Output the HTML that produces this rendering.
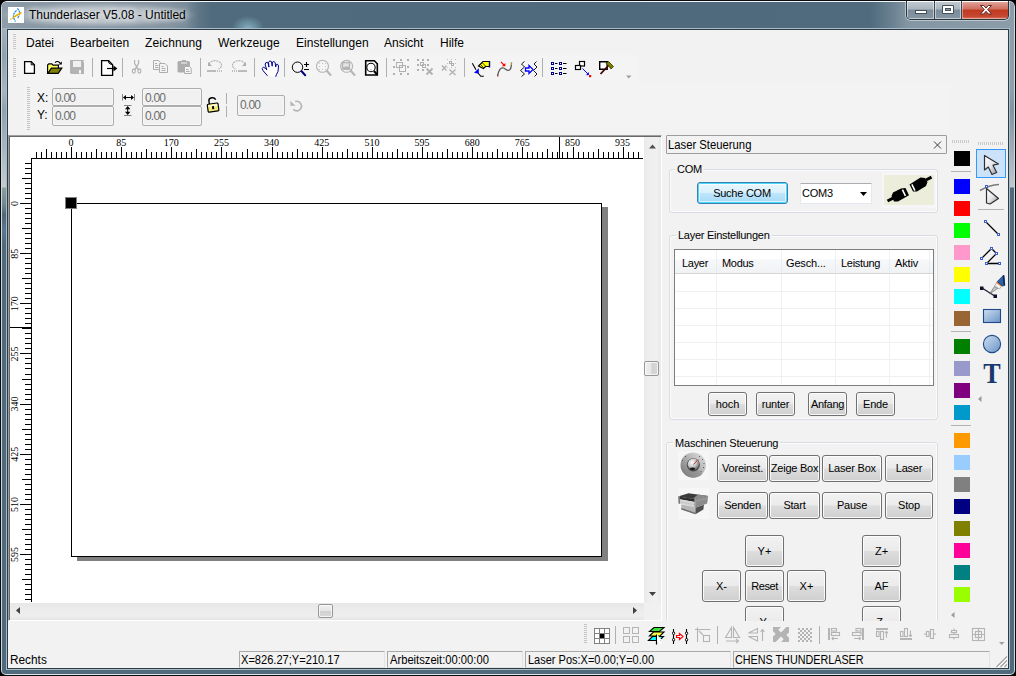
<!DOCTYPE html>
<html lang="de">
<head>
<meta charset="utf-8">
<title>Thunderlaser V5.08 - Untitled</title>
<style>
*{box-sizing:border-box;margin:0;padding:0}
html,body{width:1016px;height:676px;overflow:hidden;background:#000}
body{position:relative;font-family:"Liberation Sans",sans-serif;font-size:12px;color:#000}
.a{position:absolute}
.t{position:absolute;white-space:pre;line-height:14px;height:14px}
.t11{font-size:11px}
.btn{position:absolute;border:1px solid #707070;border-radius:3px;background:linear-gradient(#f2f2f2 0%,#ebebeb 48%,#dddddd 52%,#cfcfcf 100%);box-shadow:inset 0 0 0 1px rgba(255,255,255,.85);font-size:11px;text-align:center;white-space:pre}
.gb{position:absolute;border:1px solid #d7dde2;border-radius:3px;box-shadow:inset 0 0 0 1px #fcfcfc, 0 0 0 1px rgba(255,255,255,0.0)}
.gbl{position:absolute;background:#f2f2f2;font-size:11px;line-height:13px;height:13px;white-space:pre;padding:0 2px}
.inp{position:absolute;border:1px solid #adadad;border-radius:2px;background:#f1f1f1;color:#6d6d6d;font-size:12px;box-shadow:inset 0 0 0 1px #f7f7f7}
.sep{position:absolute;width:1px;background:#b0b0b0}
.sw{position:absolute;left:954px;width:16px;height:15px}
.pane{position:absolute;top:651px;height:17px;border:1px solid #a9a9a9;border-right-color:#e3e3e3;border-bottom-color:#e3e3e3}
svg{position:absolute;overflow:visible}
</style>
</head>
<body>
<!-- frame -->
<div class="a" id="win" style="left:0;top:0;width:1016px;height:676px;border-radius:7px 7px 6px 6px;background:#0a0d10;overflow:hidden">
  <div class="a" style="left:1px;top:1px;width:1014px;height:674px;border-radius:6px 6px 5px 5px;background:#4e6a7c;border:1px solid #ccd6dd;border-top-color:#f4f7f9;border-bottom-color:#dde3e7;overflow:hidden">
    <div class="a" style="left:0;top:0;width:1012px;height:26px;background:radial-gradient(ellipse 16px 12px at 246px 26px,rgba(150,190,215,.75) 0%,rgba(130,175,190,.5) 50%,rgba(120,160,180,0) 100%),radial-gradient(ellipse 100px 13px at 96px 13px,rgba(255,255,255,.5) 0%,rgba(255,255,255,.4) 55%,rgba(255,255,255,.12) 85%,rgba(255,255,255,0) 100%),linear-gradient(90deg,#8f9eaa 0px,#8a99a5 20px,#8695a1 165px,#788b99 184px,#5d7687 197px,#506b7d 210px,#4e6a7c 600px,#4f6b7d 868px,#6a8192 890px,#8496a3 906px,#8c9da9 1012px)"></div>
    <div class="a" style="left:0;top:26px;width:4px;height:222px;background:linear-gradient(#a5b1bb 0px,#8fa1af 27px,#a8b5bf 62px,#8fa2b0 82px,#aab6bf 122px,#c5ccd0 159px,#8a9e9c 160px,#6e8890 177px,#4d677a 187px,#5b7890 202px,#4e6a7c 217px)"></div>
    <div class="a" style="left:1008px;top:26px;width:4px;height:222px;background:linear-gradient(#8c9da9 0px,#8fa0ac 60px,#8094a3 82px,#a0adb8 122px,#c0c8ce 159px,#4e6a7c 160px)"></div>
  </div>
  <div class="a" style="left:6px;top:28px;width:1004px;height:642px;border:1px solid #a9bcc8"></div>
  <div class="a" style="left:7px;top:29px;width:1002px;height:640px;border:1px solid #2c3a44;background:#f2f2f2"></div>
  <svg style="left:8px;top:7px" width="16" height="16" viewBox="0 0 16 16"><rect width="16" height="16" fill="#fff"/><path d="M8.500 3.300Q5 7 5.400 9.500T7.500 14.600" fill="none" stroke="#1e8fe0" stroke-width="1.200" stroke-dasharray="2.200 .700"/><path d="M9.400 1.300Q12 4.500 11.700 6.500T9.400 11.600" fill="none" stroke="#1e8fe0" stroke-width="1.200" stroke-dasharray="2.200 .700"/><path d="M2.300 12.500L6 10" fill="none" stroke="#f2b400" stroke-width="1.200" stroke-dasharray="1.200 .600"/><path d="M6 10L13.500 5.500" fill="none" stroke="#f2b400" stroke-width="1.700"/></svg>
  <div class="t" style="left:29px;top:8px;font-size:12px;text-shadow:0 0 5px rgba(255,255,255,.9),0 0 9px rgba(255,255,255,.8)">Thunderlaser V5.08 - Untitled</div>
  <div class="a" style="left:905px;top:1px;width:105px;height:20px;border:1px solid rgba(255,255,255,.45);border-top:0;border-radius:0 0 6px 6px"></div>
  <div class="a" style="left:906px;top:1px;width:103px;height:19px;border:1px solid #27333d;border-top:0;border-radius:0 0 5px 5px;overflow:hidden">
    <div class="a" style="left:0;top:0;width:28px;height:18px;background:linear-gradient(#c3ccd3 0%,#aab5be 45%,#7b8d9b 50%,#8596a3 100%);box-shadow:inset 0 0 0 1px rgba(255,255,255,.5),inset 0 1px 0 #fff;border-right:1px solid #3b4852"></div>
    <div class="a" style="left:28px;top:0;width:27px;height:18px;background:linear-gradient(#c3ccd3 0%,#aab5be 45%,#7b8d9b 50%,#8596a3 100%);box-shadow:inset 0 0 0 1px rgba(255,255,255,.5),inset 0 1px 0 #fff;border-right:1px solid #3b4852"></div>
    <div class="a" style="left:55px;top:0;width:47px;height:18px;background:linear-gradient(#e6b0a8 0%,#d88a80 22%,#d0705f 45%,#c03a20 50%,#c64630 85%,#d97a60 100%);box-shadow:inset 0 0 0 1px rgba(255,255,255,.4),inset 0 1px 0 #fff"></div>
    <svg style="left:0;top:-1px" width="102" height="19" viewBox="0 0 102 19"><rect x="8.500" y="10.500" width="11" height="3" fill="#fff" stroke="#454f58" stroke-width="1"/><path d="M35.500 5.500h11v8h-11z" fill="#fff" stroke="#454f58"/><rect x="38.500" y="8.500" width="5" height="2" fill="#8d9aa5" stroke="#454f58"/><path d="M73.500 5.500h3.200l2.300 2.600 2.300-2.600h3.200l-3.800 4.200 3.800 4.300h-3.200l-2.300-2.700-2.300 2.700h-3.200l3.800-4.300z" fill="#fff" stroke="#5b2a22" stroke-width="1"/></svg>
  </div>
</div>
<!-- menu -->
<div class="a" style="left:13px;top:34px;width:3px;height:16px;background:repeating-linear-gradient(#c8c8c8 0 1px,transparent 1px 2px)"></div>
<div class="t" style="left:26px;top:36px">Datei</div>
<div class="t" style="left:70px;top:36px;letter-spacing:.12px">Bearbeiten</div>
<div class="t" style="left:145px;top:36px;letter-spacing:.12px">Zeichnung</div>
<div class="t" style="left:218px;top:36px;letter-spacing:.15px">Werkzeuge</div>
<div class="t" style="left:296px;top:36px;letter-spacing:.05px">Einstellungen</div>
<div class="t" style="left:384px;top:36px">Ansicht</div>
<div class="t" style="left:440px;top:36px">Hilfe</div>
<!-- toolbar1 -->
<div class="a tbband" style="left:10px;top:55px;width:629px;height:26px;background:#f4f4f4;border-radius:2px"></div>
<div class="a" style="left:13px;top:58px;width:3px;height:19px;background:repeating-linear-gradient(#c4c4c4 0 1px,transparent 1px 2px)"></div>
<div class="sep" style="left:92px;top:58px;height:19px"></div>
<div class="sep" style="left:122px;top:58px;height:19px"></div>
<div class="sep" style="left:200px;top:58px;height:19px"></div>
<div class="sep" style="left:254px;top:58px;height:19px"></div>
<div class="sep" style="left:284px;top:58px;height:19px"></div>
<div class="sep" style="left:386px;top:58px;height:19px"></div>
<div class="sep" style="left:464px;top:58px;height:19px"></div>
<div class="sep" style="left:542px;top:58px;height:19px"></div>
<svg style="left:0;top:0" width="640" height="82" viewBox="0 0 640 82">
  <!-- new -->
  <path d="M24.6 61.6h6.6l3.2 3.2v8.6h-9.8z" fill="#fff" stroke="#000" stroke-width="1.3"/>
  <path d="M31.2 61.6v3.2h3.2" fill="none" stroke="#000" stroke-width="1"/>
  <!-- open -->
  <path d="M47.6 73.4v-8.3l1.2-1.2h3l1.2 1.2h5.4v3.2" fill="#ffff66" stroke="#000" stroke-width="1.2"/>
  <path d="M47.8 73.4l3.6-5.2h10.4l-3.6 5.2z" fill="#808000" stroke="#000" stroke-width="1.2"/>
  <path d="M55 62.6c1.6-1.6 3.8-1.4 5.2 0.6" fill="none" stroke="#000" stroke-width="1.1"/>
  <path d="M58.6 64.6h3.2v-3.2z" fill="#000"/>
  <!-- save (disabled) -->
  <path d="M70 60h14v14h-13l-1-1z" fill="#b3b3b3"/>
  <rect x="73" y="61" width="8" height="6" fill="#f0f0f0"/>
  <rect x="83" y="61" width="1" height="1" fill="#f0f0f0"/>
  <rect x="79" y="70" width="2" height="3.5" fill="#f6f6f6"/>
  <!-- export -->
  <path d="M101.6 60.7h7l4 4v10.6h-11z" fill="#fff" stroke="#000" stroke-width="1.3"/>
  <path d="M108.6 60.7c-.6 2 .8 3.8 3.6 3.6" fill="none" stroke="#000" stroke-width="1"/>
  <path d="M107 68.5h7" stroke="#000" stroke-width="1.2"/>
  <path d="M113.5 65.5l3.8 3-3.8 3z" fill="#000"/>
  <!-- cut (disabled) -->
  <g fill="none" stroke="#adadad" stroke-width="1.1">
    <path d="M134.6 60v3.4l3.6 6.2M138.6 60v3.4l-3.6 6.2"/>
    <ellipse cx="133.8" cy="71" rx="1.5" ry="2.1"/><ellipse cx="139.4" cy="71" rx="1.5" ry="2.1"/>
  </g>
  <!-- copy (disabled) -->
  <g fill="#f4f4f4" stroke="#adadad" stroke-width="1">
    <path d="M153.5 60.5h5l2 2v7h-7z"/><path d="M159.5 63.5h5.5l2.500 2.500v6.500h-8z"/>
  </g>
  <g stroke="#adadad" stroke-width="1"><path d="M155 63.500h2M155 65.500h3.500M155 67.500h3.500M161.500 66.500h2M161.500 68.500h4M161.500 70.500h4"/></g>
  <!-- paste (disabled) -->
  <rect x="177.500" y="61" width="12.500" height="11.500" rx="1.500" fill="#adadad"/>
  <rect x="182" y="60" width="4" height="2" fill="#adadad"/>
  <rect x="181" y="62.500" width="6" height="1" fill="#f6f6f6"/>
  <path d="M184.500 66.500h5l1.700 1.700v5.300h-6.700z" fill="#f6f6f6" stroke="#adadad"/>
  <path d="M186 69.500h2.500M186 71.500h3.500" stroke="#adadad"/>
  <!-- undo (disabled) -->
  <g fill="none" stroke="#adadad" stroke-width="1.1">
    <path d="M209 64c2-3.500 7-4.500 10.500-2c3 2.200 2.600 5.500 -1 7" stroke-dasharray="2 0.800"/>
  </g>
  <path d="M208 62v4h4z" fill="#adadad"/>
  <path d="M207 71h9" stroke="#adadad" stroke-width="1.600"/>
  <path d="M217 71h1M219 71h1M221 71h1" stroke="#adadad" stroke-width="1.600"/>
  <!-- redo (disabled) -->
  <g fill="none" stroke="#adadad" stroke-width="1.100">
    <path d="M245 64c-2-3.500-7-4.500-10.500-2c-3 2.200-2.600 5.500 1 7" stroke-dasharray="2 0.800"/>
  </g>
  <path d="M246 62v4h-4z" fill="#adadad"/>
  <path d="M238 71h9" stroke="#adadad" stroke-width="1.600"/>
  <path d="M232 71h1M234 71h1M236 71h1" stroke="#adadad" stroke-width="1.600"/>
  <!-- hand -->
  <path d="M267.500 75.800l-4.300-5-1-2.300 1.200-1.400 2.400 1.600 1 1.200-1.600-5 .4-2 1.700-.6 1 1.600.6 3.200-.4-5 1.400-1.100 1.600.6.700 4.600.2-4 1.500-.6 1.300 1 .5 4.400.6-2.600 1.400 0 .8 1.600-.5 5.400-1.700 3.400-.6 2" fill="#fff" stroke="#000090" stroke-width="1" stroke-linejoin="round"/>
  <!-- zoom +- -->
  <circle cx="297.500" cy="67.200" r="5.200" fill="none" stroke="#000" stroke-width="1"/>
  <path d="M301.600 71.300l3.600 3.900" stroke="#000080" stroke-width="2" stroke-linecap="round"/>
  <path d="M304 64.500h5M306.500 62v5M304 69.500h5" stroke="#000" stroke-width="1.100"/>
  <!-- zoom 2 (disabled) -->
  <circle cx="322.500" cy="66.300" r="6" fill="none" stroke="#b4b4b4" stroke-width="1.100"/>
  <path d="M327 71l3.500 4" stroke="#b4b4b4" stroke-width="2" stroke-linecap="round"/>
  <g fill="#c4c4c4"><rect x="319" y="63" width="1" height="1"/><rect x="322" y="63" width="1" height="1"/><rect x="325" y="63" width="1" height="1"/><rect x="319" y="66" width="1" height="1"/><rect x="325" y="66" width="1" height="1"/><rect x="319" y="69" width="1" height="1"/><rect x="322" y="69" width="1" height="1"/><rect x="325" y="69" width="1" height="1"/></g>
  <!-- zoom 3 (disabled) -->
  <circle cx="346.600" cy="66.300" r="6" fill="none" stroke="#b4b4b4" stroke-width="1.100"/>
  <path d="M351 71l3.500 4" stroke="#b4b4b4" stroke-width="2" stroke-linecap="round"/>
  <path d="M342.500 62.500h7v5.500h-7z" fill="#e4e4e4" stroke="#b4b4b4" stroke-width="1.500"/>
  <path d="M342 70l3-3.500h3l3 3.500z" fill="#b4b4b4"/>
  <!-- zoom page -->
  <path d="M365.700 60.800h8.600l3 3v11.200h-11.600z" fill="#fff" stroke="#000" stroke-width="1.600"/>
  <circle cx="371" cy="67.500" r="4.200" fill="#fff" stroke="#000" stroke-width="1.100"/>
  <path d="M374 71l3 3.500" stroke="#000" stroke-width="2"/>
  <path d="M370 69.500h2l-1 1z" fill="#888"/>
  <!-- group (disabled) -->
  <g fill="#b0b0b0">
    <rect x="393" y="59" width="2" height="2"/><rect x="400" y="59" width="2" height="2"/><rect x="407" y="59" width="2" height="2"/>
    <rect x="393" y="66" width="2" height="2"/><rect x="407" y="66" width="2" height="2"/>
    <rect x="393" y="73" width="2" height="2"/><rect x="400" y="73" width="2" height="2"/><rect x="407" y="73" width="2" height="2"/>
  </g>
  <g fill="none" stroke="#b0b0b0" stroke-width="1"><rect x="396.500" y="62.500" width="6" height="5"/><rect x="399.500" y="65.500" width="6" height="6"/></g>
  <!-- ungroup (disabled) -->
  <g fill="#b0b0b0">
    <rect x="417" y="59" width="2" height="2"/><rect x="422" y="59" width="2" height="2"/><rect x="427" y="59" width="2" height="2"/>
    <rect x="417" y="64" width="2" height="2"/><rect x="427" y="64" width="2" height="2"/>
    <rect x="417" y="69" width="2" height="2"/><rect x="422" y="69" width="2" height="2"/>
  </g>
  <g fill="none" stroke="#b0b0b0" stroke-width="1"><rect x="420.500" y="62.500" width="3" height="3"/><rect x="422.500" y="64.500" width="3" height="3"/></g>
  <path d="M426.500 68.500l6 6M432.500 68.500l-6 6" stroke="#b0b0b0" stroke-width="1.800"/>
  <!-- ungroup all (disabled) -->
  <g fill="#c0c0c0">
    <rect x="447" y="59" width="1" height="1"/><rect x="451" y="59" width="1" height="1"/><rect x="455" y="59" width="1" height="1"/>
    <rect x="447" y="63" width="1" height="1"/><rect x="455" y="63" width="1" height="1"/><rect x="447" y="67" width="1" height="1"/><rect x="451" y="67" width="1" height="1"/><rect x="455" y="67" width="1" height="1"/>
  </g>
  <g fill="none" stroke="#b0b0b0" stroke-width="1"><rect x="449.500" y="61.500" width="2" height="2"/><rect x="451.500" y="63.500" width="2" height="2"/></g>
  <path d="M442 65.500l4.500 5M446.500 65.500l-4.500 5M449.500 69.500l6 5.500M455.500 69.500l-6 5.500" stroke="#b0b0b0" stroke-width="1.300"/>
  <!-- icon A -->
  <path d="M472.300 63.200l3.700 6.500M478 73l2.800 3.300h3" fill="none" stroke="#000" stroke-width="1.100"/>
  <path d="M474 72.800l4.800-4.600v5.600z" fill="#0000ff"/>
  <path d="M478.500 66l4.500-4.500h6.500v5h-4l-2 2z" fill="#ffff00" stroke="#000" stroke-width="1.100"/>
  <path d="M489.500 61v6.500" stroke="#000080" stroke-width="1.300"/>
  <path d="M480.500 64.500l3 3M482.500 63l3 3" stroke="#000" stroke-width=".8"/>
  <!-- icon B -->
  <path d="M497.500 75.500c1.500-6 3.500-8.500 6-7.500s3.500 3.500 6 2c1.500-1 2-4 2-7.500" fill="none" stroke="#555" stroke-width="1.300"/>
  <rect x="497" y="75" width="1.500" height="1.500" fill="#b04040"/><rect x="511" y="63" width="1" height="2" fill="#c0a000"/>
  <path d="M501 62l3 3" stroke="#ff0000" stroke-width="1.100"/><path d="M501.800 66.200h3.600v-3.200z" fill="#ff0000"/>
  <!-- icon C -->
  <path d="M524.500 61.500l-3 2.500 3 3-4 3.500 4 3.500-3 2.500M536.500 61.500l-2.500 2.500 3 3-3.500 3.500 3.500 3.500-2.500 2.500" fill="none" stroke="#000" stroke-width=".9"/>
  <path d="M525.500 68h3.500v-2.500l4 4-4 4v-2.500h-3.500z" fill="#fff" stroke="#0000ff" stroke-width="1.300"/>
  <!-- list icon -->
  <g fill="#fff" stroke="#000090" stroke-width="1"><rect x="551.500" y="62.500" width="2" height="2"/><rect x="551.500" y="67.500" width="2" height="2"/><rect x="551.500" y="72.500" width="2" height="2"/><rect x="559.500" y="62.500" width="2" height="2"/><rect x="559.500" y="67.500" width="2" height="2"/><rect x="559.500" y="72.500" width="2" height="2"/></g>
  <path d="M555 63.500h2.500M555 68.500h2.500M555 73.500h2.500M563 63.500h3.500M563 68.500h3.500M563 73.500h3.500" stroke="#000" stroke-width="1.100"/>
  <!-- squares + arrow -->
  <rect x="579.500" y="61.500" width="5" height="4.500" fill="#fff" stroke="#000" stroke-width="1.200"/>
  <rect x="575.500" y="65.500" width="5" height="4" fill="#fff" stroke="#000" stroke-width="1.200"/>
  <path d="M582.500 68.500l5.500 5.500" stroke="#0000ff" stroke-width="1"/><path d="M586 75.200l3-.2-.3-3z" fill="#0000ff"/>
  <rect x="589" y="75" width="2.200" height="2.200" fill="#ff0000"/>
  <!-- hammer -->
  <path d="M599.700 61.700h7.500v7.600h-7.500z" fill="#fff" stroke="#000" stroke-width="1.400"/>
  <path d="M600.500 74l8-8.500" stroke="#400000" stroke-width="1.800"/>
  <path d="M606 63.500l2.500-2 5 5-2.500 2.500-1.500-2z" fill="#808000" stroke="#303000" stroke-width=".8"/>
  <!-- dropdown -->
  <path d="M626 75.500h5.500l-2.750 3z" fill="#a0a0a0"/>
</svg>
<!-- toolbar2 -->
<div class="a tbband" style="left:23px;top:83px;width:927px;height:48px;background:#f3f3f3;border-radius:2px"></div>
<div class="a" style="left:27px;top:87px;width:3px;height:43px;background:repeating-linear-gradient(#c4c4c4 0 1px,transparent 1px 2px)"></div>
<div class="t" style="left:37px;top:91px">X:</div>
<div class="t" style="left:37px;top:108px">Y:</div>
<div class="inp" style="left:52px;top:88px;width:62px;height:18px"></div>
<div class="inp" style="left:52px;top:106px;width:62px;height:20px"></div>
<div class="inp" style="left:142px;top:88px;width:60px;height:18px"></div>
<div class="inp" style="left:142px;top:106px;width:60px;height:20px"></div>
<div class="inp" style="left:237px;top:95px;width:48px;height:21px"></div>
<div class="t" style="left:55px;top:91px;color:#6d6d6d;letter-spacing:-.8px">0.00</div>
<div class="t" style="left:55px;top:109px;color:#6d6d6d;letter-spacing:-.8px">0.00</div>
<div class="t" style="left:145px;top:91px;color:#6d6d6d;letter-spacing:-.8px">0.00</div>
<div class="t" style="left:145px;top:109px;color:#6d6d6d;letter-spacing:-.8px">0.00</div>
<div class="t" style="left:240px;top:98px;color:#6d6d6d;letter-spacing:-.8px">0.00</div>
<div class="sep" style="left:226px;top:93px;height:11px;background:#b0b0b0"></div>
<div class="sep" style="left:226px;top:106px;height:11px;background:#b0b0b0"></div>
<svg style="left:0;top:0" width="320" height="135" viewBox="0 0 320 135">
  <path d="M122.500 94v6.500M134.500 94v6.500" stroke="#808080" stroke-width="1" fill="none"/>
  <path d="M124 97.500h9" stroke="#000" stroke-width="1" fill="none"/>
  <path d="M123 97.500l3-2.500v5zM134 97.500l-3-2.500v5z" fill="#000"/>
  <path d="M124 105.500h7.500M124 115.500h7.500" stroke="#808080" stroke-width="1" fill="none"/>
  <path d="M127.700 107v7" stroke="#000" stroke-width="1" fill="none"/>
  <path d="M127.700 106l-2.700 3.200h5.400zM127.700 115l-2.700-3.200h5.400z" fill="#000"/>
  <g transform="rotate(-8 213 107)">
    <path d="M209.800 104v-3.500c0-3.500 6.400-3.800 6.800-.3" fill="none" stroke="#000" stroke-width="1.400"/>
    <rect x="207.600" y="103.600" width="10.800" height="8" rx="1" fill="#f6ea7a" stroke="#000" stroke-width="1.200"/>
    <rect x="208.600" y="104.600" width="8.800" height="2" fill="#fffbd0"/>
    <rect x="212" y="106.200" width="2" height="3" fill="#000"/>
  </g>
  <path d="M295.200 101.600a4.700 4.700 0 1 1 -1.800 7.800" fill="none" stroke="#b4b4b4" stroke-width="1.600"/>
  <path d="M290.400 101v4.700h5.200z" fill="#b4b4b4"/>
</svg>
<!-- canvas -->
<div class="a" style="left:8px;top:135px;width:654px;height:486px;background:#fff;border:1px solid #a0a0a0;border-right-color:#fff;border-bottom-color:#fff"></div>
<div class="a" style="left:9px;top:136px;width:652px;height:484px;border:1px solid #696969;border-right:0;border-bottom:0"></div>
<div class="a" style="left:644px;top:137px;width:17px;height:466px;background:linear-gradient(90deg,#eaeaea,#eeeeee 30%,#f0f0f0 75%,#e9e9e9)"></div>
<div class="a" style="left:10px;top:603px;width:634px;height:17px;background:linear-gradient(#e7e7e7,#ebebeb 30%,#eeeeee 75%,#e5e5e5)"></div>
<div class="a" style="left:644px;top:603px;width:17px;height:17px;background:#f0f0f0"></div>
<div class="a" style="left:644px;top:361px;width:15px;height:15px;border:1px solid #979797;border-radius:2px;background:linear-gradient(90deg,#f0f0f0,#e6e6e6 48%,#d2d2d2 52%,#d8d8d8);box-shadow:inset 0 0 0 1px rgba(255,255,255,.7)"></div>
<div class="a" style="left:318px;top:604px;width:15px;height:14px;border:1px solid #979797;border-radius:2px;background:linear-gradient(#f0f0f0,#e6e6e6 48%,#d2d2d2 52%,#d8d8d8);box-shadow:inset 0 0 0 1px rgba(255,255,255,.7)"></div>
<svg style="left:0;top:0" width="662" height="621" viewBox="0 0 662 621"><path d="M649 148.500h7l-3.500-4z" fill="#505050"/><path d="M649 592h7l-3.500 4z" fill="#404040"/><path d="M20 607v7l-4-3.500z" fill="#404040"/><path d="M633 607v7l4-3.500z" fill="#404040"/><g fill="#000" shape-rendering="crispEdges"><rect x="31" y="158" width="612" height="1"/><rect x="31" y="158" width="1" height="444"/><path d="M36 152h1V158h-1zM41 152h1V158h-1zM46 149h1V158h-1zM51 152h1V158h-1zM56 152h1V158h-1zM61 152h1V158h-1zM66 152h1V158h-1zM71 147h1V158h-1zM76 152h1V158h-1zM81 152h1V158h-1zM86 152h1V158h-1zM91 152h1V158h-1zM96 149h1V158h-1zM101 152h1V158h-1zM106 152h1V158h-1zM111 152h1V158h-1zM116 152h1V158h-1zM121 147h1V158h-1zM126 152h1V158h-1zM131 152h1V158h-1zM136 152h1V158h-1zM141 152h1V158h-1zM146 149h1V158h-1zM151 152h1V158h-1zM156 152h1V158h-1zM161 152h1V158h-1zM166 152h1V158h-1zM171 147h1V158h-1zM176 152h1V158h-1zM181 152h1V158h-1zM186 152h1V158h-1zM191 152h1V158h-1zM196 149h1V158h-1zM201 152h1V158h-1zM206 152h1V158h-1zM211 152h1V158h-1zM216 152h1V158h-1zM221 147h1V158h-1zM226 152h1V158h-1zM231 152h1V158h-1zM236 152h1V158h-1zM242 152h1V158h-1zM247 149h1V158h-1zM252 152h1V158h-1zM257 152h1V158h-1zM262 152h1V158h-1zM267 152h1V158h-1zM272 147h1V158h-1zM277 152h1V158h-1zM282 152h1V158h-1zM287 152h1V158h-1zM292 152h1V158h-1zM297 149h1V158h-1zM302 152h1V158h-1zM307 152h1V158h-1zM312 152h1V158h-1zM317 152h1V158h-1zM322 147h1V158h-1zM327 152h1V158h-1zM332 152h1V158h-1zM337 152h1V158h-1zM342 152h1V158h-1zM347 149h1V158h-1zM352 152h1V158h-1zM357 152h1V158h-1zM362 152h1V158h-1zM367 152h1V158h-1zM372 147h1V158h-1zM377 152h1V158h-1zM382 152h1V158h-1zM387 152h1V158h-1zM392 152h1V158h-1zM397 149h1V158h-1zM402 152h1V158h-1zM407 152h1V158h-1zM412 152h1V158h-1zM417 152h1V158h-1zM422 147h1V158h-1zM427 152h1V158h-1zM432 152h1V158h-1zM437 152h1V158h-1zM442 152h1V158h-1zM447 149h1V158h-1zM452 152h1V158h-1zM457 152h1V158h-1zM462 152h1V158h-1zM467 152h1V158h-1zM472 147h1V158h-1zM477 152h1V158h-1zM482 152h1V158h-1zM487 152h1V158h-1zM492 152h1V158h-1zM497 149h1V158h-1zM502 152h1V158h-1zM507 152h1V158h-1zM512 152h1V158h-1zM517 152h1V158h-1zM522 147h1V158h-1zM527 152h1V158h-1zM532 152h1V158h-1zM537 152h1V158h-1zM542 152h1V158h-1zM547 149h1V158h-1zM552 152h1V158h-1zM557 152h1V158h-1zM562 152h1V158h-1zM567 152h1V158h-1zM573 147h1V158h-1zM578 152h1V158h-1zM583 152h1V158h-1zM588 152h1V158h-1zM593 152h1V158h-1zM598 149h1V158h-1zM603 152h1V158h-1zM608 152h1V158h-1zM613 152h1V158h-1zM618 152h1V158h-1zM623 147h1V158h-1zM628 152h1V158h-1zM633 152h1V158h-1zM638 152h1V158h-1z"/><path d="M25 163H31v1H25zM25 168H31v1H25zM25 173H31v1H25zM22 178H31v1H22zM25 183H31v1H25zM25 188H31v1H25zM25 193H31v1H25zM25 198H31v1H25zM20 203H31v1H20zM25 208H31v1H25zM25 213H31v1H25zM25 218H31v1H25zM25 223H31v1H25zM22 228H31v1H22zM25 233H31v1H25zM25 238H31v1H25zM25 243H31v1H25zM25 248H31v1H25zM20 253H31v1H20zM25 258H31v1H25zM25 263H31v1H25zM25 268H31v1H25zM25 273H31v1H25zM22 278H31v1H22zM25 283H31v1H25zM25 288H31v1H25zM25 293H31v1H25zM25 298H31v1H25zM20 303H31v1H20zM25 308H31v1H25zM25 313H31v1H25zM25 318H31v1H25zM25 323H31v1H25zM22 328H31v1H22zM25 333H31v1H25zM25 338H31v1H25zM25 343H31v1H25zM25 348H31v1H25zM20 353H31v1H20zM25 358H31v1H25zM25 363H31v1H25zM25 368H31v1H25zM25 374H31v1H25zM22 379H31v1H22zM25 384H31v1H25zM25 389H31v1H25zM25 394H31v1H25zM25 399H31v1H25zM20 404H31v1H20zM25 409H31v1H25zM25 414H31v1H25zM25 419H31v1H25zM25 424H31v1H25zM22 429H31v1H22zM25 434H31v1H25zM25 439H31v1H25zM25 444H31v1H25zM25 449H31v1H25zM20 454H31v1H20zM25 459H31v1H25zM25 464H31v1H25zM25 469H31v1H25zM25 474H31v1H25zM22 479H31v1H22zM25 484H31v1H25zM25 489H31v1H25zM25 494H31v1H25zM25 499H31v1H25zM20 504H31v1H20zM25 509H31v1H25zM25 514H31v1H25zM25 519H31v1H25zM25 524H31v1H25zM22 529H31v1H22zM25 534H31v1H25zM25 539H31v1H25zM25 544H31v1H25zM25 549H31v1H25zM20 554H31v1H20zM25 559H31v1H25zM25 564H31v1H25zM25 569H31v1H25zM25 574H31v1H25zM22 579H31v1H22zM25 584H31v1H25zM25 589H31v1H25zM25 594H31v1H25zM25 599H31v1H25z"/><rect x="559" y="137" width="1" height="21"/><rect x="10" y="327" width="21" height="1"/><rect x="77" y="557" width="531" height="4" fill="#808080"/><rect x="602" y="207" width="6" height="354" fill="#808080"/><rect x="71" y="203" width="531" height="354" fill="#000"/><rect x="72" y="204" width="529" height="352" fill="#fff"/><rect x="65" y="197" width="12" height="12" fill="#808080"/><rect x="66" y="198" width="10" height="10" fill="#000"/></g><g font-family="'Liberation Serif',serif" font-size="10" fill="#000" text-anchor="middle"><text x="71.0" y="146">0</text><text x="121.2" y="146">85</text><text x="171.3" y="146">170</text><text x="221.4" y="146">255</text><text x="271.6" y="146">340</text><text x="321.8" y="146">425</text><text x="371.9" y="146">510</text><text x="422.1" y="146">595</text><text x="472.2" y="146">680</text><text x="522.3" y="146">765</text><text x="572.5" y="146">850</text><text x="622.6" y="146">935</text><text transform="translate(18 203.5) rotate(-90)">0</text><text transform="translate(18 253.7) rotate(-90)">85</text><text transform="translate(18 303.8) rotate(-90)">170</text><text transform="translate(18 353.9) rotate(-90)">255</text><text transform="translate(18 404.1) rotate(-90)">340</text><text transform="translate(18 454.2) rotate(-90)">425</text><text transform="translate(18 504.4) rotate(-90)">510</text><text transform="translate(18 554.5) rotate(-90)">595</text></g></svg>
<!-- panel -->
<div class="a" style="left:662px;top:134px;width:287px;height:487px;overflow:hidden">
 <div class="a" style="left:-662px;top:-134px;width:1016px;height:676px">
  <div class="a" style="left:666px;top:135px;width:281px;height:19px;border:1px solid #9d9d9d;border-radius:1px;background:#f2f2f2"></div>
  <div class="t" style="left:668px;top:138px;transform-origin:0 0;transform:scaleX(.94)">Laser Steuerung</div>
  <svg style="left:933px;top:140px" width="10" height="10" viewBox="0 0 10 10"><path d="M1 1.500l7 7M8 1.500l-7 7" stroke="#3c3c3c" stroke-width="1"/></svg>
  <!-- COM group -->
  <div class="gb" style="left:669px;top:169px;width:269px;height:44px"></div>
  <div class="gbl" style="left:675px;top:163px;letter-spacing:-.3px">COM</div>
  <div class="btn" style="left:697px;top:182px;width:91px;height:22px;line-height:20px;text-indent:-1px;border-color:#3c7fb1;background:linear-gradient(#eaf6fd 0%,#d9f0fc 48%,#bee6fd 52%,#a7d9f5 100%);box-shadow:inset 0 0 0 1px #48d8fb, inset 0 0 0 2px rgba(255,255,255,.6);letter-spacing:-.25px">Suche COM</div>
  <div class="a" style="left:800px;top:183px;width:72px;height:21px;border:1px solid #e3e9ef;border-top-color:#abadb3;border-radius:1px;background:#fff"></div>
  <div class="t t11" style="left:802px;top:186px;letter-spacing:-.2px">COM3</div>
  <svg style="left:859px;top:191px" width="9" height="6" viewBox="0 0 9 6"><path d="M1 1h7l-3.500 4z" fill="#000"/></svg>
  <div class="a" style="left:882px;top:172px;width:54px;height:36px;background:#f6f6f8"></div>
  <div class="a" style="left:884px;top:175px;width:50px;height:30px;background:#ededdb"></div>
  <svg style="left:884px;top:175px" width="50" height="30" viewBox="0 0 50 30">
    <path d="M3.500 26l5.500-2.800" stroke="#000" stroke-width="3"/>
    <path d="M7.500 21l1.500-3.500 8-4 4.500-.5 3.500 7.200-11 6.300h-4z" fill="#000"/>
    <path d="M18.400 14.700l3 6.200" stroke="#fff" stroke-width="1.600"/>
    <path d="M42 5l5.500-2.800" stroke="#000" stroke-width="3"/>
    <path d="M25.500 9.500l3.500 7 4 0 9-5.500 1.500-4-2.500-4-4.500-.5z" fill="#000"/>
    <path d="M27.900 9.400l3 6.200" stroke="#fff" stroke-width="1.600"/>
  </svg>
  <!-- Layer group -->
  <div class="gb" style="left:669px;top:235px;width:269px;height:185px"></div>
  <div class="gbl" style="left:676px;top:229px;letter-spacing:-.27px">Layer Einstellungen</div>
  <div class="a" style="left:674px;top:249px;width:260px;height:137px;border:1px solid #7e7e7e;background:#fff;overflow:hidden">
    <div class="a" style="left:0;top:0;width:258px;height:24px;background:linear-gradient(#ffffff 0%,#ffffff 40%,#f7f8fa 42%,#f1f2f4 100%);border-bottom:1px solid #d5d5d5"></div>
    <div class="a" style="left:41px;top:0;width:1px;height:23px;background:linear-gradient(#f2f2f2,#dfeaf7)"></div>
    <div class="a" style="left:106px;top:0;width:1px;height:23px;background:linear-gradient(#f2f2f2,#dfeaf7)"></div>
    <div class="a" style="left:160px;top:0;width:1px;height:23px;background:linear-gradient(#f2f2f2,#dfeaf7)"></div>
    <div class="a" style="left:214px;top:0;width:1px;height:23px;background:linear-gradient(#f2f2f2,#dfeaf7)"></div>
    <div class="a" style="left:254px;top:0;width:1px;height:23px;background:linear-gradient(#f2f2f2,#dfeaf7)"></div>
    <div class="a" style="left:0;top:25px;width:258px;height:110px;background:
      linear-gradient(90deg,transparent 41px,#f0f0f0 41px,#f0f0f0 42px,transparent 42px,transparent 106px,#f0f0f0 106px,#f0f0f0 107px,transparent 107px,transparent 160px,#f0f0f0 160px,#f0f0f0 161px,transparent 161px,transparent 214px,#f0f0f0 214px,#f0f0f0 215px,transparent 215px,transparent 254px,#f0f0f0 254px,#f0f0f0 255px,transparent 255px),
      repeating-linear-gradient(transparent 0,transparent 16px,#f0f0f0 16px,#f0f0f0 17px)"></div>
    <div class="t t11" style="left:7px;top:6px;letter-spacing:-.3px">Layer</div>
    <div class="t t11" style="left:47px;top:6px;letter-spacing:-.3px">Modus</div>
    <div class="t t11" style="left:111px;top:6px;letter-spacing:-.15px">Gesch...</div>
    <div class="t t11" style="left:166px;top:6px;letter-spacing:-.3px">Leistung</div>
    <div class="t t11" style="left:220px;top:6px;letter-spacing:-.15px">Aktiv</div>
  </div>
  <div class="btn" style="left:708px;top:392px;width:39px;height:24px;line-height:22px;letter-spacing:-.1px">hoch</div>
  <div class="btn" style="left:756px;top:392px;width:39px;height:24px;line-height:22px;letter-spacing:-.2px">runter</div>
  <div class="btn" style="left:808px;top:392px;width:39px;height:24px;line-height:22px;letter-spacing:-.3px">Anfang</div>
  <div class="btn" style="left:856px;top:392px;width:39px;height:24px;line-height:22px;letter-spacing:-.2px">Ende</div>
  <!-- Maschinen group -->
  <div class="gb" style="left:666px;top:442px;width:272px;height:200px"></div>
  <div class="gbl" style="left:673px;top:437px;letter-spacing:-.2px">Maschinen Steuerung</div>
  <div class="a" style="left:678px;top:451px;width:31px;height:29px;background:#f6f6f6"></div>
  <svg style="left:678px;top:451px" width="31" height="29" viewBox="0 0 31 29">
    <defs><linearGradient id="dg" x1="1" y1="0" x2="0" y2="1"><stop offset="0" stop-color="#e6e6e6"/><stop offset=".45" stop-color="#b4b4b4"/><stop offset="1" stop-color="#6a6a6a"/></linearGradient><radialGradient id="kg" cx="38%" cy="35%" r="70%"><stop offset="0" stop-color="#ffffff"/><stop offset=".55" stop-color="#c4c4c4"/><stop offset="1" stop-color="#5a5a5a"/></radialGradient></defs>
    <circle cx="15.200" cy="14.100" r="12.700" fill="url(#dg)"/>
    <path d="M6 22.500a12.700 12.700 0 0 0 18.500 .3l-8-7z" fill="#8a8a8a" opacity=".55"/>
    <circle cx="15.300" cy="13.800" r="6.600" fill="#4a4a4a"/>
    <circle cx="15.500" cy="13.300" r="5.800" fill="url(#kg)"/>
    <ellipse cx="14.500" cy="17.800" rx="2.600" ry="1.400" fill="#1c1c1c"/>
    <path d="M15.500 13.500l4.500-5" stroke="#c03030" stroke-width="1"/>
    <g fill="#5a5a5a"><rect x="24" y="8" width="1" height="1"/><rect x="25.500" y="12" width="1" height="1"/><rect x="25" y="16" width="1" height="1"/><rect x="22.500" y="20" width="1" height="1"/><rect x="21" y="5" width="1" height="1"/><rect x="4" y="9" width="1" height="1"/><rect x="7" y="5" width="1" height="1"/></g>
  </svg>
  <div class="a" style="left:678px;top:488px;width:31px;height:31px;background:#f6f6f6"></div>
  <svg style="left:678px;top:488px" width="31" height="31" viewBox="0 0 31 31">
    <path d="M.100 8.400l10.400-3.200 19.700 2.900-12.800 3.100z" fill="#3a3a3a"/>
    <path d="M20 6.600l10.200 1.500-12.800 3.100-2.400-.6z" fill="#8a8a8a"/>
    <path d="M.100 8.400l2 .3v7.400l-1.600-.600z" fill="#7a7a7a"/>
    <path d="M2 8.700l14.600 2.300v2.900l-14.600-2.600z" fill="#2e2e2e"/>
    <path d="M2 11.500l14.600 2.500v4.900l-14.600-2.800z" fill="#d6d6d6"/>
    <path d="M2 14l14.600 2.600" stroke="#b8b8b8" stroke-width=".6"/>
    <path d="M16.600 11l.8 .2v8.600l-.8-.2z" fill="#6a6a6a"/>
    <path d="M17.400 11.200l12.800-3.100-1 7.500-11.800 4.200z" fill="#8c8c8c"/>
    <path d="M17.400 13.500l12.500-3.400" stroke="#a8a8a8" stroke-width=".7"/>
    <path d="M3.300 16.400l13.300 2.600.8 7.200-14.100-4.800z" fill="#b6b6b6"/>
    <path d="M3.300 20l14 4.800v1.400l-14-4.800z" fill="#6e6e6e"/>
    <path d="M17.400 19.800l8.600-3.100-.6 4.700-8 4.800z" fill="#505050"/>
  </svg>
  <div class="btn" style="left:717px;top:455px;width:51px;height:27px;line-height:25px;letter-spacing:-.2px">Voreinst.</div>
  <div class="btn" style="left:769px;top:455px;width:51px;height:27px;line-height:25px;letter-spacing:-.25px">Zeige Box</div>
  <div class="btn" style="left:822px;top:455px;width:60px;height:27px;line-height:25px;letter-spacing:-.2px">Laser Box</div>
  <div class="btn" style="left:885px;top:455px;width:48px;height:27px;line-height:25px;letter-spacing:-.2px">Laser</div>
  <div class="btn" style="left:717px;top:492px;width:51px;height:27px;line-height:25px;letter-spacing:-.2px">Senden</div>
  <div class="btn" style="left:769px;top:492px;width:51px;height:27px;line-height:25px;letter-spacing:-.2px">Start</div>
  <div class="btn" style="left:822px;top:492px;width:60px;height:27px;line-height:25px;letter-spacing:-.2px">Pause</div>
  <div class="btn" style="left:885px;top:492px;width:48px;height:27px;line-height:25px;letter-spacing:-.2px">Stop</div>
  <div class="btn" style="left:745px;top:535px;width:39px;height:32px;line-height:30px">Y+</div>
  <div class="btn" style="left:702px;top:570px;width:39px;height:32px;line-height:30px">X-</div>
  <div class="btn" style="left:745px;top:570px;width:39px;height:32px;line-height:30px;letter-spacing:-.4px">Reset</div>
  <div class="btn" style="left:787px;top:570px;width:39px;height:32px;line-height:30px">X+</div>
  <div class="btn" style="left:745px;top:606px;width:39px;height:32px;line-height:30px">Y-</div>
  <div class="btn" style="left:862px;top:535px;width:39px;height:32px;line-height:30px">Z+</div>
  <div class="btn" style="left:862px;top:570px;width:39px;height:32px;line-height:30px">AF</div>
  <div class="btn" style="left:862px;top:606px;width:39px;height:32px;line-height:30px">Z-</div>
 </div>
</div>
<!-- palette -->
<div class="a" style="left:952px;top:140px;width:18px;height:3px;background:repeating-linear-gradient(90deg,#cacaca 0 1px,transparent 1px 2px)"></div>
<div class="sw" style="top:151px;background:#000000"></div>
<div class="a" style="left:951px;top:171px;width:20px;height:1px;background:#b4b4b4"></div>
<div class="sw" style="top:179px;background:#0000ff"></div>
<div class="sw" style="top:201px;background:#ff0000"></div>
<div class="sw" style="top:223px;background:#00ff00"></div>
<div class="sw" style="top:245px;background:#ff99cc"></div>
<div class="sw" style="top:267px;background:#ffff00"></div>
<div class="sw" style="top:289px;background:#00ffff"></div>
<div class="sw" style="top:311px;background:#996633"></div>
<div class="a" style="left:951px;top:331px;width:20px;height:1px;background:#b4b4b4"></div>
<div class="sw" style="top:339px;background:#008000"></div>
<div class="sw" style="top:361px;background:#9999cc"></div>
<div class="sw" style="top:383px;background:#800080"></div>
<div class="sw" style="top:405px;background:#0099cc"></div>
<div class="a" style="left:951px;top:425px;width:20px;height:1px;background:#b4b4b4"></div>
<div class="sw" style="top:433px;background:#ff9900"></div>
<div class="sw" style="top:455px;background:#99ccff"></div>
<div class="sw" style="top:477px;background:#808080"></div>
<div class="sw" style="top:499px;background:#000080"></div>
<div class="sw" style="top:521px;background:#808000"></div>
<div class="sw" style="top:543px;background:#ff0099"></div>
<div class="sw" style="top:565px;background:#008080"></div>
<div class="sw" style="top:587px;background:#99ff00"></div>
<svg style="left:950px;top:611px" width="6" height="8" viewBox="0 0 6 8"><path d="M4.500 1v6l-3.500-3z" fill="#9a9a9a"/></svg>
<!-- tools -->
<div class="a" style="left:978px;top:142px;width:26px;height:3px;background:repeating-linear-gradient(90deg,#cacaca 0 1px,transparent 1px 2px)"></div>
<div class="a" style="left:976px;top:149px;width:30px;height:29px;border:1px solid #3399ff;background:#cbe2f9"></div>
<div class="a" style="left:978px;top:209px;width:26px;height:1px;background:#b4b4b4"></div>
<svg style="left:0;top:0" width="1016" height="420" viewBox="0 0 1016 420">
  <defs>
    <linearGradient id="ag" x1="0" y1="0" x2="1" y2="1"><stop offset="0" stop-color="#ffffff"/><stop offset=".5" stop-color="#e8e8ec"/><stop offset="1" stop-color="#8c8c9c"/></linearGradient>
    <linearGradient id="rg" x1="0" y1="0" x2="1" y2="1"><stop offset="0" stop-color="#cfdff1"/><stop offset="1" stop-color="#6a93c6"/></linearGradient>
  </defs>
  <path d="M984.500 155.500v14.500l3.800-3 3.700 7.500 4.700-2-3.700-7.300 5.500-1.200z" fill="url(#ag)" stroke="#303030" stroke-width="1.200" stroke-linejoin="round"/>
  <path d="M980 190.500c6-3.500 11-5.500 19-6" fill="none" stroke="#7a7a7a" stroke-width="1.500"/>
  <path d="M986.500 188.500v14.500l3.500 1 8.500-5.500z" fill="url(#ag)" stroke="#303030" stroke-width="1.200" stroke-linejoin="round"/>
  <rect x="985.500" y="185.500" width="2" height="2" fill="#fff" stroke="#3a5fcd" stroke-width="1"/>
  <path d="M985.500 221.500l13 13" stroke="#000" stroke-width="1.300"/>
  <g fill="#fff" stroke="#3a5fcd" stroke-width="1"><rect x="984.500" y="220.500" width="2" height="2"/><rect x="997.500" y="233.500" width="2" height="2"/></g>
  <path d="M981.500 258.500l10-10 5 5-10 10h13" fill="none" stroke="#000" stroke-width="1.300"/>
  <g fill="#fff" stroke="#3a5fcd" stroke-width="1"><rect x="990.500" y="247.500" width="2" height="2"/><rect x="995.500" y="252.500" width="2" height="2"/><rect x="980.500" y="257.500" width="2" height="2"/><rect x="985.500" y="262.500" width="2" height="2"/><rect x="998.500" y="262.500" width="2" height="2"/></g>
  <!-- pen -->
  <path d="M982 288l13.500 8.500" stroke="#1a1a2a" stroke-width="1.200"/>
  <rect x="980" y="286.500" width="3.500" height="3.500" fill="#10102a"/><rect x="993.500" y="294.500" width="3.500" height="3.500" fill="#10102a"/>
  <path d="M989.500 294l5-7.500 3 2z" fill="#c8c8d0" stroke="#555" stroke-width=".6"/>
  <path d="M994.500 286l2.500-4 5 3.300-2.500 3.700z" fill="#f0f0f0" stroke="#777" stroke-width=".5"/>
  <path d="M996.300 283l1-1.500 5 3.500-1 1.500z" fill="#e87830"/>
  <path d="M997.300 281.500l6.500-6.500 1 10.500-2.500 .5z" fill="#2e62a8" stroke="#0d2f66" stroke-width=".7"/>
  <path d="M1003.500 275.500l.8 9.500" stroke="#0b2350" stroke-width="1.500"/>
  <!-- rect -->
  <rect x="983.500" y="309.500" width="17" height="13" fill="url(#rg)" stroke="#1c4a8a" stroke-width="1.100"/>
  <circle cx="992" cy="344" r="8.600" fill="url(#rg)" stroke="#1c4a8a" stroke-width="1.100"/>
  <text x="992" y="383.500" font-family="'Liberation Serif',serif" font-weight="bold" font-size="29" fill="#17396f" text-anchor="middle" transform="translate(992 0) scale(.9 1) translate(-992 0)">T</text>
  <path d="M981.500 396v6l-3.500-3z" fill="#9a9a9a"/>
</svg>
<!-- bottombar -->
<div class="a" style="left:584px;top:624px;width:3px;height:19px;background:repeating-linear-gradient(#c4c4c4 0 1px,transparent 1px 2px)"></div>
<div class="sep" style="left:615px;top:626px;height:18px;background:#b0b0b0"></div>
<div class="sep" style="left:717px;top:626px;height:18px;background:#b0b0b0"></div>
<div class="sep" style="left:819px;top:626px;height:18px;background:#b0b0b0"></div>
<svg style="left:0;top:0" width="1016" height="652" viewBox="0 0 1016 652">
  <!-- grid icon -->
  <rect x="594.500" y="628.500" width="15" height="15" fill="#fff" stroke="#808080"/>
  <path d="M599.500 628.500v15M604.500 628.500v15M594.500 633.500h15M594.500 638.500h15" stroke="#808080" fill="none"/>
  <rect x="600" y="634" width="4" height="4" fill="#000"/>
  <!-- four squares (disabled) -->
  <g fill="none" stroke="#b4b4b4" stroke-width="1"><rect x="623.500" y="627.500" width="6" height="6"/><rect x="632.500" y="627.500" width="6" height="6"/><rect x="623.500" y="636.500" width="6" height="6"/><rect x="632.500" y="636.500" width="6" height="6"/></g>
  <!-- layers -->
  <path d="M648.500 640.500l4-4h11l-4 4z" fill="#00ffff" stroke="#000" stroke-width="1.100"/>
  <path d="M649.500 636l4-4h10.500l-4 4z" fill="#ffff40" stroke="#000" stroke-width="1.100"/>
  <path d="M649.500 631.500l4.500-4h10l-4.500 4z" fill="#40e040" stroke="#000" stroke-width="1.100"/>
  <path d="M656.500 634.500v10" stroke="#000" stroke-width="1.200"/>
  <path d="M657 634.500l5 5.500-2 .5 1.500 3.500-2 .5-1.500-3.500-1 1z" fill="#fff"/>
  <!-- distribute -->
  <path d="M673.500 629v15M686.500 629v15" stroke="#000" stroke-width="1.100"/>
  <g fill="#fff" stroke="#000" stroke-width="1"><rect x="672.500" y="632" width="2.200" height="2.500" rx="1"/><rect x="672.500" y="638.500" width="2.200" height="2.500" rx="1"/><rect x="685.500" y="632" width="2.200" height="2.500" rx="1"/><rect x="685.500" y="638.500" width="2.200" height="2.500" rx="1"/></g>
  <path d="M676.500 635.500h3v-2l3.500 3-3.500 3v-2h-3z" fill="#fff" stroke="#ff0000" stroke-width="1.200"/>
  <!-- disabled icons -->
  <g fill="none" stroke="#b4b4b4" stroke-width="1.100">
    <path d="M697.500 627.500v14.500M695 629.500h15.500M699 631l4 4"/><rect x="703.500" y="635.500" width="6" height="6"/>
    <path d="M731.500 627.500l-6 10h6zM733.500 627.500l6 10h-6zM726 641h12.500M736 639l2.500 2-2.500 2"/>
    <path d="M757.500 628.500l-9 4.500h9zM757.500 641l-9-4.500h9zM762.500 641v-11.500M760.500 632l2-2.500 2 2.500"/>
    <rect x="831.500" y="628.500" width="5" height="2.500"/><rect x="831.500" y="632.500" width="8" height="3"/><path d="M832 638.500h6M833.500 637l-1.500 1.500 1.500 1.500"/>
    <rect x="856" y="628.500" width="5" height="2.500"/><rect x="852.500" y="632.500" width="8.500" height="3"/><path d="M854 638.500h6.500M859 637l1.500 1.500-1.500 1.500"/>
    <rect x="876.500" y="631.500" width="2.500" height="5"/><rect x="880.500" y="631.500" width="3" height="8"/><path d="M886.500 631.500v6M885 633l1.500-1.500 1.500 1.500"/>
    <rect x="900.500" y="631.500" width="2.500" height="5"/><rect x="904.500" y="628.500" width="3" height="8"/><path d="M910.500 630.500v6M909 635l1.500 1.500 1.500-1.500"/>
    <path d="M924 634h12"/><rect x="926.500" y="631.500" width="2.500" height="5" fill="#f2f2f2"/><rect x="930.500" y="629.500" width="3" height="9" fill="#f2f2f2"/>
    <path d="M954 628.500v11"/><rect x="951.500" y="630.500" width="5" height="2" fill="#f2f2f2"/><rect x="949.500" y="634.500" width="9" height="3" fill="#f2f2f2"/>
    <rect x="972.500" y="628.500" width="12" height="12"/><path d="M978.500 628.500v12M972.500 634.500h12"/><rect x="975.500" y="631.500" width="6" height="6"/>
  </g>
  <path d="M773 627h8l-2.700 2.700 2.700 2.700 2.700-2.700 2.600-2.700h2.700v5.500l-2.700 2.500 2.700 2.700v4.300h-8l2.700-2.700-2.700-2.700-2.700 2.700-2.600 2.700h-2.700v-5.500l2.700-2.500-2.700-2.700z" fill="#b4b4b4"/>
  <g fill="#b4b4b4">
    <path d="M798 628h2v2h-2zM802 628h2v2h-2zM806 628h2v2h-2zM810 628h2v2h-2zM800 630h2v2h-2zM804 630h2v2h-2zM808 630h2v2h-2zM798 632h2v2h-2zM802 632h2v2h-2zM806 632h2v2h-2zM810 632h2v2h-2zM800 634h2v2h-2zM804 634h2v2h-2zM808 634h2v2h-2zM798 636h2v2h-2zM802 636h2v2h-2zM806 636h2v2h-2zM810 636h2v2h-2zM800 638h2v2h-2zM804 638h2v2h-2zM808 638h2v2h-2zM798 640h2v2h-2zM802 640h2v2h-2zM806 640h2v2h-2zM810 640h2v2h-2z"/>
  </g>
  <g fill="#b4b4b4"><rect x="828" y="628" width="2" height="12"/><rect x="862" y="628" width="2" height="12"/><rect x="876" y="628" width="12" height="2"/><rect x="900" y="638" width="12" height="2"/></g>
  <path d="M999 642h5.500l-2.750 3z" fill="#a0a0a0"/>
</svg>
<!-- status -->
<div class="t" style="left:10px;top:653px;transform-origin:0 0;transform:scaleX(.985)">Rechts</div>
<div class="pane" style="left:239px;width:146px"></div>
<div class="pane" style="left:387px;width:136px"></div>
<div class="pane" style="left:525px;width:206px"></div>
<div class="pane" style="left:733px;width:257px"></div>
<div class="t" style="left:241px;top:653px;transform-origin:0 0;transform:scaleX(.924)">X=826.27;Y=210.17</div>
<div class="t" style="left:390px;top:653px;transform-origin:0 0;transform:scaleX(.932)">Arbeitszeit:00:00:00</div>
<div class="t" style="left:528px;top:653px;transform-origin:0 0;transform:scaleX(.917)">Laser Pos:X=0.00;Y=0.00</div>
<div class="t" style="left:735px;top:653px;transform-origin:0 0;transform:scaleX(.898)">CHENS THUNDERLASER</div>
<svg style="left:995px;top:655px" width="13" height="13" viewBox="0 0 13 13"><path d="M12 1.500l-10.500 10.500M12 5.500l-6.500 6.500M12 9.500l-2.500 2.500" stroke="#a0a0a0" stroke-width="1.200"/><path d="M12.500 2.500l-10 10M12.500 6.500l-6 6M12.500 10.500l-2 2" stroke="#fff" stroke-width=".8"/></svg>
</body>
</html>
